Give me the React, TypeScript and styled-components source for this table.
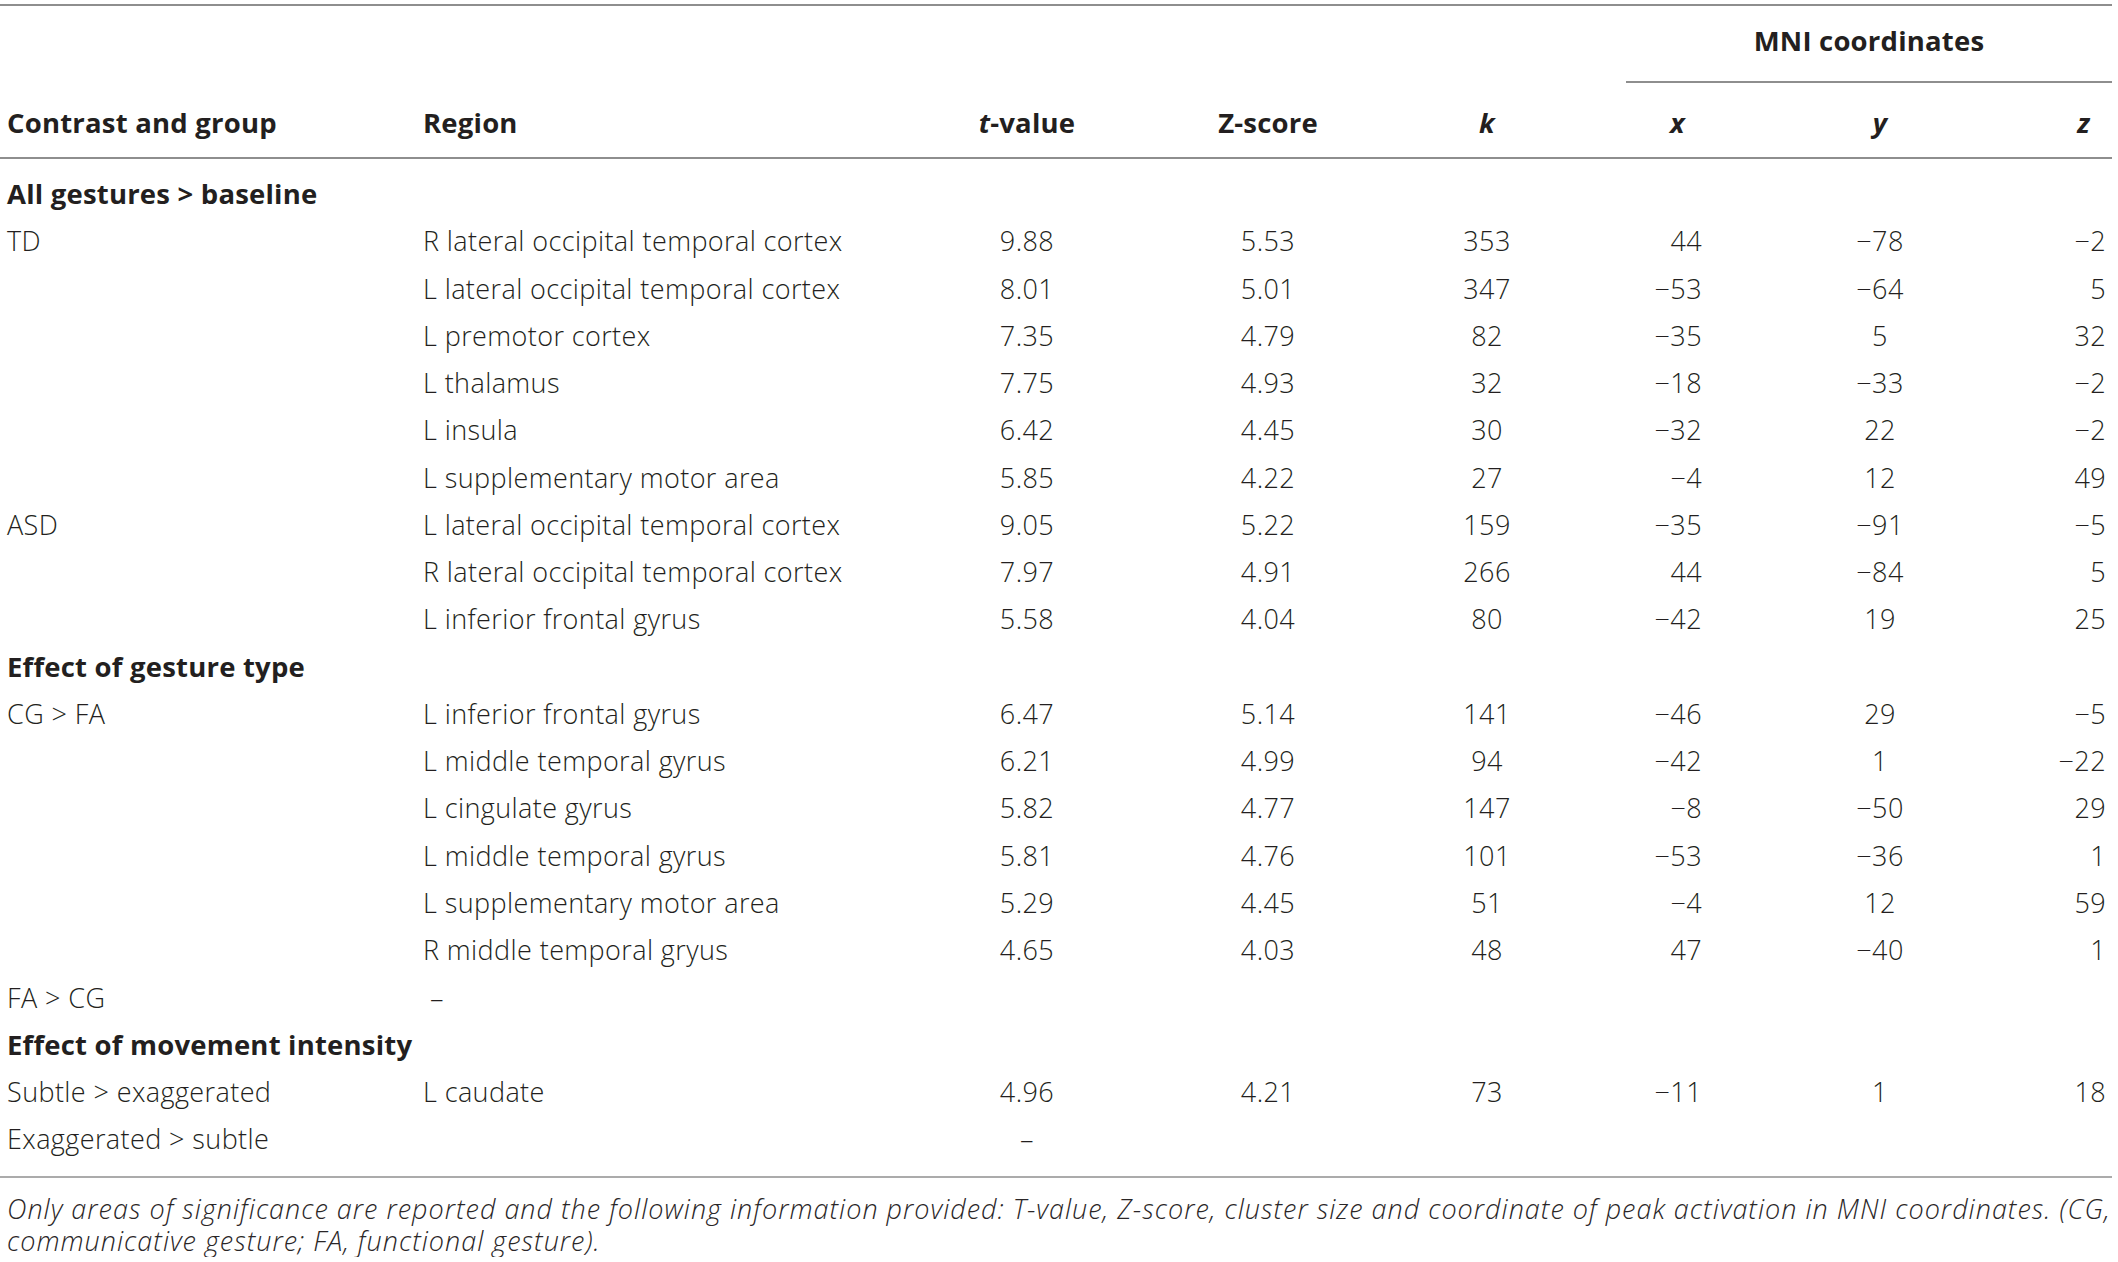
import React from "react";
import styled, { createGlobalStyle } from "styled-components";

const GlobalStyle = createGlobalStyle`
  html, body {
    margin: 0;
    padding: 0;
    background: #ffffff;
  }
`;

const COLS = "416px 491px 240px 242px 196px 195px 200px 132px";
const FONT = `"Open Sans", "Liberation Sans", Arial, sans-serif`;
const ROW_H = 47.28;

type Align = "left" | "center" | "right";

const Page = styled.div`
  width: 2112px;
  padding-top: 4px;
  font-family: ${FONT};
  color: #231f20;
`;

const Table = styled.div`
  border-top: 2px solid #8e8e8e;
`;

const Head = styled.div`
  display: grid;
  grid-template-columns: ${COLS};
  grid-template-rows: 77px 74px;
  border-bottom: 2px solid #8e8e8e;
`;

const HeadCell = styled.div<{
  $col: string;
  $row: string;
  $align?: Align;
  $padRight?: number;
}>`
  grid-column: ${(p) => p.$col};
  grid-row: ${(p) => p.$row};
  align-self: end;
  font-size: 27.5px;
  font-weight: 700;
  letter-spacing: 0.2px;
  line-height: 40px;
  padding-bottom: 14px;
  padding-left: ${(p) => ((p.$align ?? "left") === "left" ? "7px" : "0")};
  padding-right: ${(p) => `${p.$padRight ?? 0}px`};
  text-align: ${(p) => p.$align ?? "left"};
  white-space: nowrap;
`;

const SpanHead = styled.div`
  grid-column: 6 / 9;
  grid-row: 1;
  padding-top: 15px;
  padding-bottom: 20px;
  margin-left: 41px;
  border-bottom: 2px solid #8e8e8e;
  font-size: 27.5px;
  font-weight: 700;
  letter-spacing: 0.2px;
  line-height: 40px;
  text-align: center;
  white-space: nowrap;
`;

const Em = styled.i`
  font-style: italic;
`;

const Body = styled.div`
  padding: 11px 0 13px;
  border-bottom: 2px solid #ababab;
`;

const Row = styled.div`
  display: grid;
  grid-template-columns: ${COLS};
  height: ${ROW_H}px;
  font-size: 27px;
  letter-spacing: 0.4px;
  line-height: ${ROW_H}px;
  font-weight: 300;
  white-space: nowrap;
`;

const Cell = styled.div<{ $align?: Align; $padRight?: number }>`
  text-align: ${(p) => p.$align ?? "center"};
  padding-left: ${(p) => ((p.$align ?? "center") === "left" ? "7px" : "0")};
  padding-right: ${(p) => `${p.$padRight ?? 0}px`};
`;

const Dash = styled.span`
  margin-left: 7px;
`;

const Section = styled.div`
  grid-column: 1 / -1;
  padding-left: 7px;
  font-size: 27.5px;
  letter-spacing: 0.2px;
  font-weight: 700;
`;

const Footnote = styled.p`
  margin: 0;
  padding: 15px 0 0 7px;
  font-size: 27px;
  letter-spacing: 1px;
  line-height: 32px;
  font-weight: 300;
  font-style: italic;
  white-space: nowrap;
  color: #2a2627;
`;

type DataRow = {
  group?: string;
  region: string;
  t?: string;
  z?: string;
  k?: string;
  x?: string;
  y?: string;
  zc?: string;
};

type Item = { section: string } | DataRow;

const rows: Item[] = [
  { section: "All gestures > baseline" },
  { group: "TD", region: "R lateral occipital temporal cortex", t: "9.88", z: "5.53", k: "353", x: "44", y: "−78", zc: "−2" },
  { region: "L lateral occipital temporal cortex", t: "8.01", z: "5.01", k: "347", x: "−53", y: "−64", zc: "5" },
  { region: "L premotor cortex", t: "7.35", z: "4.79", k: "82", x: "−35", y: "5", zc: "32" },
  { region: "L thalamus", t: "7.75", z: "4.93", k: "32", x: "−18", y: "−33", zc: "−2" },
  { region: "L insula", t: "6.42", z: "4.45", k: "30", x: "−32", y: "22", zc: "−2" },
  { region: "L supplementary motor area", t: "5.85", z: "4.22", k: "27", x: "−4", y: "12", zc: "49" },
  { group: "ASD", region: "L lateral occipital temporal cortex", t: "9.05", z: "5.22", k: "159", x: "−35", y: "−91", zc: "−5" },
  { region: "R lateral occipital temporal cortex", t: "7.97", z: "4.91", k: "266", x: "44", y: "−84", zc: "5" },
  { region: "L inferior frontal gyrus", t: "5.58", z: "4.04", k: "80", x: "−42", y: "19", zc: "25" },
  { section: "Effect of gesture type" },
  { group: "CG > FA", region: "L inferior frontal gyrus", t: "6.47", z: "5.14", k: "141", x: "−46", y: "29", zc: "−5" },
  { region: "L middle temporal gyrus", t: "6.21", z: "4.99", k: "94", x: "−42", y: "1", zc: "−22" },
  { region: "L cingulate gyrus", t: "5.82", z: "4.77", k: "147", x: "−8", y: "−50", zc: "29" },
  { region: "L middle temporal gyrus", t: "5.81", z: "4.76", k: "101", x: "−53", y: "−36", zc: "1" },
  { region: "L supplementary motor area", t: "5.29", z: "4.45", k: "51", x: "−4", y: "12", zc: "59" },
  { region: "R middle temporal gryus", t: "4.65", z: "4.03", k: "48", x: "47", y: "−40", zc: "1" },
  { group: "FA > CG", region: "–" },
  { section: "Effect of movement intensity" },
  { group: "Subtle > exaggerated", region: "L caudate", t: "4.96", z: "4.21", k: "73", x: "−11", y: "1", zc: "18" },
  { group: "Exaggerated > subtle", region: "", t: "–" },
];

export default function App() {
  return (
    <>
      <GlobalStyle />
      <Page>
        <Table>
          <Head>
            <HeadCell $col="1" $row="1 / 3">Contrast and group</HeadCell>
            <HeadCell $col="2" $row="1 / 3">Region</HeadCell>
            <HeadCell $col="3" $row="1 / 3" $align="center">
              <Em>t</Em>-value
            </HeadCell>
            <HeadCell $col="4" $row="1 / 3" $align="center">Z-score</HeadCell>
            <HeadCell $col="5" $row="1 / 3" $align="center">
              <Em>k</Em>
            </HeadCell>
            <SpanHead>MNI coordinates</SpanHead>
            <HeadCell $col="6" $row="2" $align="center" $padRight={10}>
              <Em>x</Em>
            </HeadCell>
            <HeadCell $col="7" $row="2" $align="center">
              <Em>y</Em>
            </HeadCell>
            <HeadCell $col="8" $row="2" $align="right" $padRight={22}>
              <Em>z</Em>
            </HeadCell>
          </Head>
          <Body>
            {rows.map((r, i) =>
              "section" in r ? (
                <Row key={i}>
                  <Section>{r.section}</Section>
                </Row>
              ) : (
                <Row key={i}>
                  <Cell $align="left">{r.group ?? ""}</Cell>
                  <Cell $align="left">
                    {r.region === "–" ? <Dash>–</Dash> : r.region}
                  </Cell>
                  <Cell>{r.t ?? ""}</Cell>
                  <Cell>{r.z ?? ""}</Cell>
                  <Cell>{r.k ?? ""}</Cell>
                  <Cell $align="right" $padRight={78}>{r.x ?? ""}</Cell>
                  <Cell>{r.y ?? ""}</Cell>
                  <Cell $align="right" $padRight={6}>{r.zc ?? ""}</Cell>
                </Row>
              )
            )}
          </Body>
        </Table>
        <Footnote>
          Only areas of significance are reported and the following information provided: T-value, Z-score, cluster size and coordinate of peak activation in MNI coordinates. (CG,
          <br />
          communicative gesture; FA, functional gesture).
        </Footnote>
      </Page>
    </>
  );
}
